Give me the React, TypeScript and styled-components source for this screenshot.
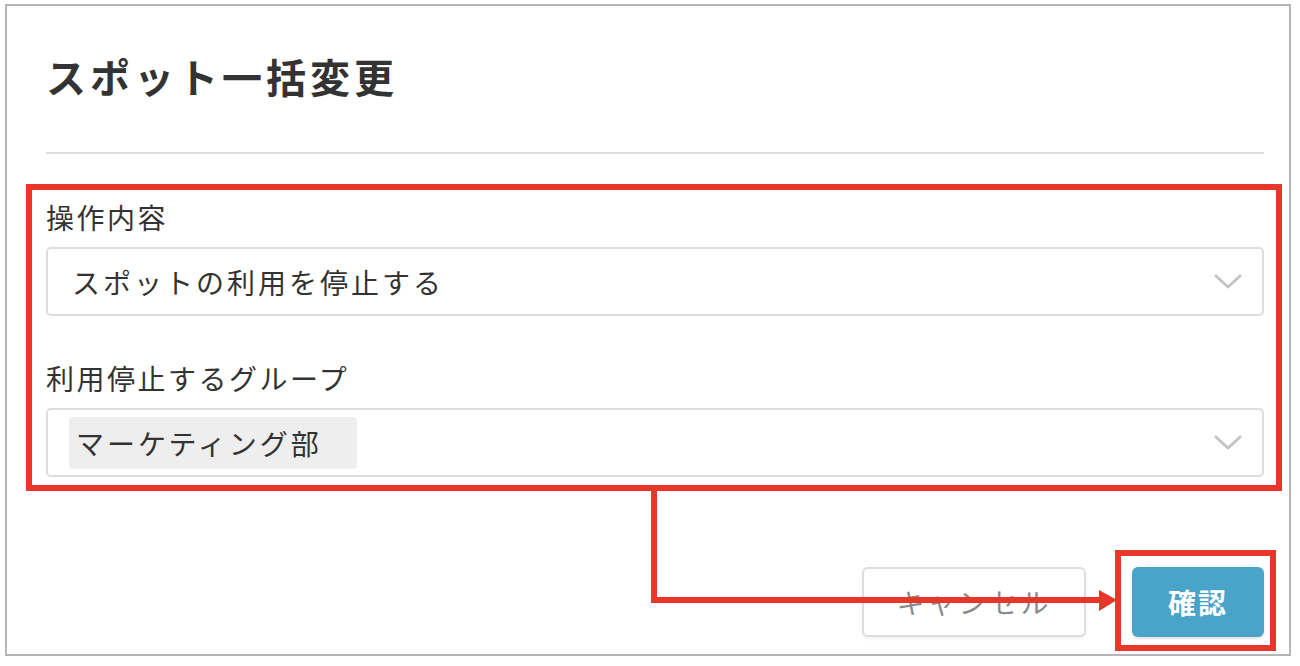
import styled, { createGlobalStyle } from "styled-components";

const GlobalStyle = createGlobalStyle`
  html, body {
    margin: 0;
    padding: 0;
    background: #ffffff;
  }
  body {
    font-family: "Noto Sans CJK JP", "Noto Sans", sans-serif;
    color: #333333;
  }
`;

const Chevron = () => (
  <svg width="28" height="16" viewBox="0 0 28 16" fill="none">
    <path d="M2 2 L14 13 L26 2" stroke="#c4c4c4" strokeWidth="3" strokeLinecap="round" strokeLinejoin="round" />
  </svg>
);

type SelectProps = {
  children: React.ReactNode;
};

const Select = (props: SelectProps) => {
  return (
    <SelectBox>
      <SelectValue>{props.children}</SelectValue>
      <Chevron />
    </SelectBox>
  );
};

const App = () => {
  return (
    <Page>
      <GlobalStyle />
      <Dialog>
        <Title>スポット一括変更</Title>
        <Divider />
        <Form>
          <Field>
            <Label>操作内容</Label>
            <Select>
              <PlainValue>スポットの利用を停止する</PlainValue>
            </Select>
          </Field>
          <Field>
            <Label>利用停止するグループ</Label>
            <Select>
              <Chip>マーケティング部</Chip>
            </Select>
          </Field>
        </Form>
        <Footer>
          <CancelButton>キャンセル</CancelButton>
          <ConfirmButton>確認</ConfirmButton>
        </Footer>
      </Dialog>

      {/* callout marks over the form and the confirm button */}
      <Callout width="1300" height="666" viewBox="0 0 1300 666">
        <rect x="29" y="187" width="1250" height="301" fill="none" stroke="#e8362a" strokeWidth="6" />
        <rect x="1118" y="553" width="155" height="95" fill="none" stroke="#e8362a" strokeWidth="6" />
        <polyline points="654,488 654,600 1101,600" fill="none" stroke="#e8362a" strokeWidth="6" />
        <polygon points="1099,590 1117,600 1099,611" fill="#e8362a" />
      </Callout>
    </Page>
  );
};

export default App;

const Page = styled.div`
  position: relative;
  width: 1300px;
  height: 666px;
  padding: 4px 0 0 5px;
  box-sizing: border-box;
`;

const Dialog = styled.div`
  width: 1286px;
  height: 652px;
  box-sizing: border-box;
  border: 2px solid #b5b5b5;
  padding: 0 25px 0 39px;
  display: flex;
  flex-direction: column;
  background: #ffffff;
`;

const Title = styled.h1`
  margin: 0;
  padding-top: 40px;
  font-size: 40px;
  line-height: 60px;
  font-weight: 700;
  letter-spacing: 4px;
  color: #333333;
`;

const Divider = styled.div`
  margin-top: 46px;
  border-top: 2px solid #dcdcdc;
`;

const Form = styled.div`
  display: flex;
  flex-direction: column;
  gap: 42px;
  padding-top: 43px;
`;

const Field = styled.div`
  display: flex;
  flex-direction: column;
  gap: 10px;
`;

const Label = styled.div`
  font-size: 28px;
  line-height: 40px;
  letter-spacing: 2.5px;
  color: #333333;
`;

const SelectBox = styled.div`
  height: 69px;
  box-sizing: border-box;
  border: 2px solid #dddddd;
  border-radius: 5px;
  display: flex;
  align-items: center;
  padding: 0 20px 0 21px;
  background: #ffffff;
`;

const SelectValue = styled.div`
  flex: 1;
  display: flex;
  align-items: center;
`;

const PlainValue = styled.span`
  padding-left: 3px;
  font-size: 28px;
  letter-spacing: 3px;
  color: #333333;
`;

const Chip = styled.span`
  display: inline-flex;
  align-items: center;
  height: 52px;
  padding: 0 35px 0 7px;
  background: #eeeeee;
  border-radius: 4px;
  font-size: 28px;
  letter-spacing: 3px;
  color: #333333;
`;

const Footer = styled.div`
  margin-top: auto;
  margin-bottom: 17px;
  display: flex;
  justify-content: flex-end;
  gap: 46px;
`;

const CancelButton = styled.button`
  width: 224px;
  height: 70px;
  border: 2px solid #dddddd;
  border-radius: 6px;
  background: #ffffff;
  font-family: "Noto Sans CJK JP", sans-serif;
  font-size: 28px;
  letter-spacing: 3px;
  color: #8a8a8a;
  box-shadow: 0 2px 3px rgba(0, 0, 0, 0.06);
`;

const ConfirmButton = styled.button`
  width: 132px;
  height: 70px;
  border: none;
  border-radius: 6px;
  background: #4aa3c9;
  font-family: "Noto Sans CJK JP", sans-serif;
  font-size: 28px;
  font-weight: 700;
  letter-spacing: 2px;
  color: #ffffff;
  box-shadow: 0 2px 3px rgba(0, 0, 0, 0.12);
`;

const Callout = styled.svg`
  position: absolute;
  top: 0;
  left: 0;
  pointer-events: none;
`;
